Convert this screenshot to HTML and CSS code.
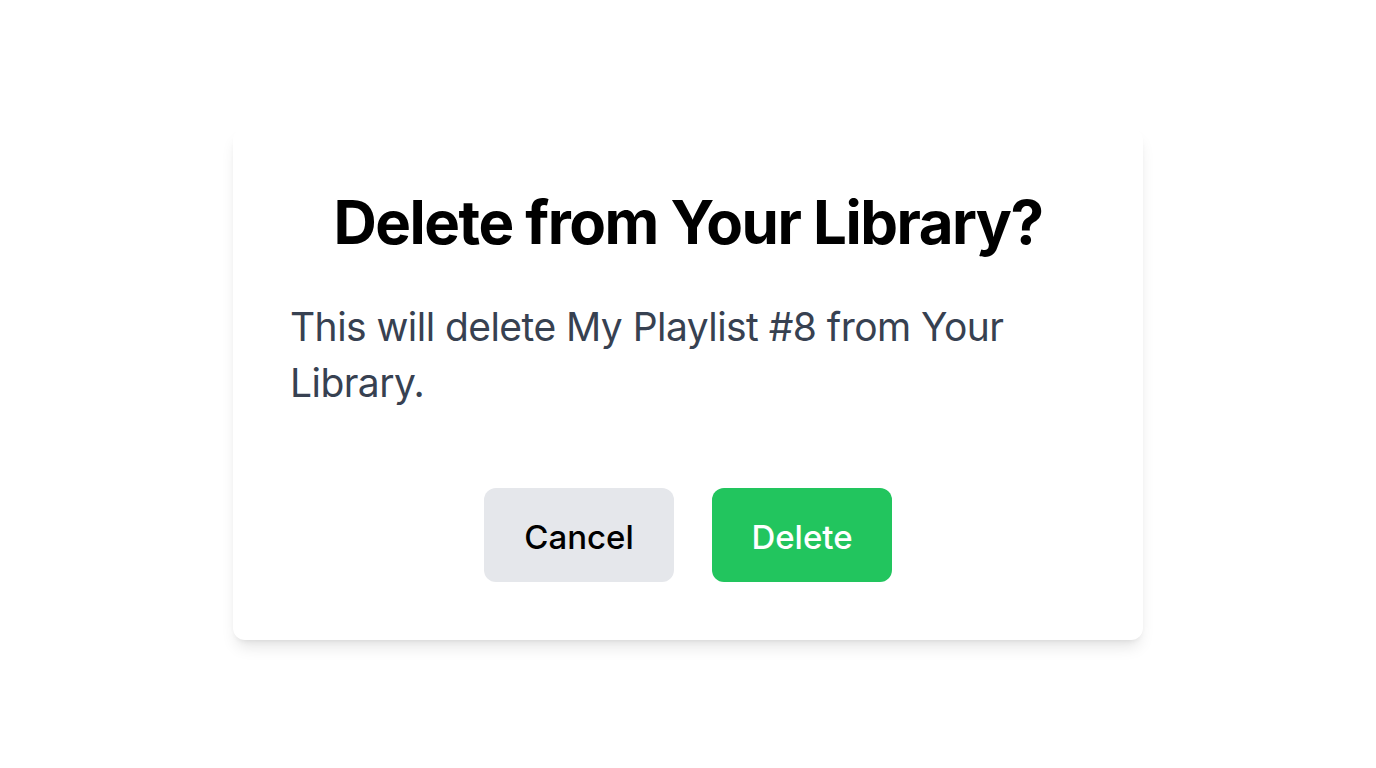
FILE: index.html
```html
<!DOCTYPE html>
<html lang="en">
<head>
<meta charset="utf-8">
<title>Delete from Your Library?</title>
<link rel="stylesheet" href="styles.css">
</head>
<body>
<div class="screen">
  <div class="dialog" role="dialog" aria-labelledby="dlg-title">
    <h1 class="dialog-title" id="dlg-title">Delete from Your Library?</h1>
    <p class="dialog-text">This will delete My Playlist #8 from Your Library.</p>
    <div class="dialog-actions">
      <button class="btn btn-cancel" type="button">Cancel</button>
      <button class="btn btn-delete" type="button">Delete</button>
    </div>
  </div>
</div>
</body>
</html>
```

FILE: styles.css
```css
* { box-sizing: border-box; }
html, body { margin: 0; padding: 0; background: #ffffff; }
body { font-family: Inter, "Noto Sans", sans-serif; }
.screen {
  width: 1376px;
  height: 768px;
  display: flex;
  align-items: center;
  justify-content: center;
}
.dialog {
  width: 910px;
  height: 512px;
  background: #ffffff;
  border-radius: 12px;
  box-shadow: 0 10px 15px -3px rgba(0,0,0,0.1), 0 4px 6px -4px rgba(0,0,0,0.1);
  padding: 64px 57px 58px;
  display: flex;
  flex-direction: column;
}
.dialog-title {
  margin: 0;
  font-size: 60px;
  line-height: 60px;
  font-weight: 700;
  color: #000000;
  text-align: center;
  letter-spacing: -1.5px;
}
.dialog-text {
  margin: 47px 0 0;
  font-size: 39px;
  line-height: 56px;
  color: #374151;
  letter-spacing: -0.55px;
}
.dialog-actions {
  margin-top: auto;
  display: flex;
  justify-content: center;
  gap: 38px;
}
.btn {
  font-family: Inter, "Noto Sans", sans-serif;
  font-size: 33px;
  font-weight: 500;
  line-height: 44px;
  height: 94px;
  padding: 27px 0 23px;
  border: none;
  border-radius: 12px;
  text-align: center;
}
.btn-cancel { background: #e5e7eb; color: #000000; width: 190px; }
.btn-delete { background: #22c55e; color: #ffffff; width: 180px; }
```
